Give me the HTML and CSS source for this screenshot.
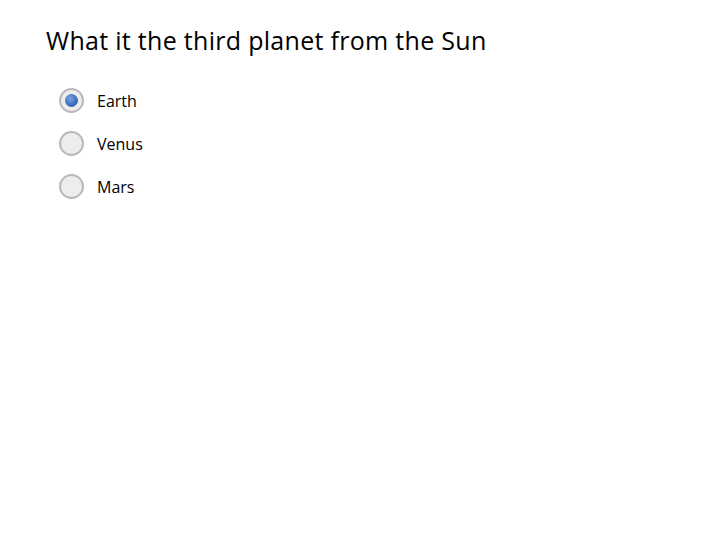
FILE: index.html
```html
<!DOCTYPE html>
<html>
<head>
<meta charset="utf-8">
<link rel="stylesheet" href="styles.css">
</head>
<body>
<div class="quiz">
  <h1 class="question">What it the third planet from the Sun</h1>
  <div class="options">
    <label class="option"><span class="radio checked"><span class="dot"></span></span><span class="label">Earth</span></label>
    <label class="option"><span class="radio"></span><span class="label">Venus</span></label>
    <label class="option"><span class="radio"></span><span class="label">Mars</span></label>
  </div>
</div>
</body>
</html>
```
FILE: styles.css
```css
html, body {
  margin: 0;
  padding: 0;
  background: #fff;
}
.quiz {
  padding: 22px 0 0 46px;
  font-family: "Open Sans", "Noto Sans", sans-serif;
  color: #000;
}
.question {
  margin: 0;
  font-size: 25px;
  font-weight: 400;
  line-height: 36px;
  letter-spacing: 0.3px;
}
.options {
  display: flex;
  flex-direction: column;
  gap: 18px;
  margin-top: 30px;
  padding-left: 13px;
}
.option {
  display: flex;
  align-items: center;
  gap: 13px;
  height: 25px;
}
.radio {
  box-sizing: border-box;
  width: 25px;
  height: 25px;
  border-radius: 50%;
  border: 2px solid #b9b9b9;
  background: #ededed;
  display: flex;
  align-items: center;
  justify-content: center;
}
.dot {
  width: 13px;
  height: 13px;
  border-radius: 50%;
  background: radial-gradient(circle at 40% 35%, #7ea3df 0%, #3e6fc1 55%, #2c5aa8 100%);
}
.label {
  font-size: 16px;
}
```
